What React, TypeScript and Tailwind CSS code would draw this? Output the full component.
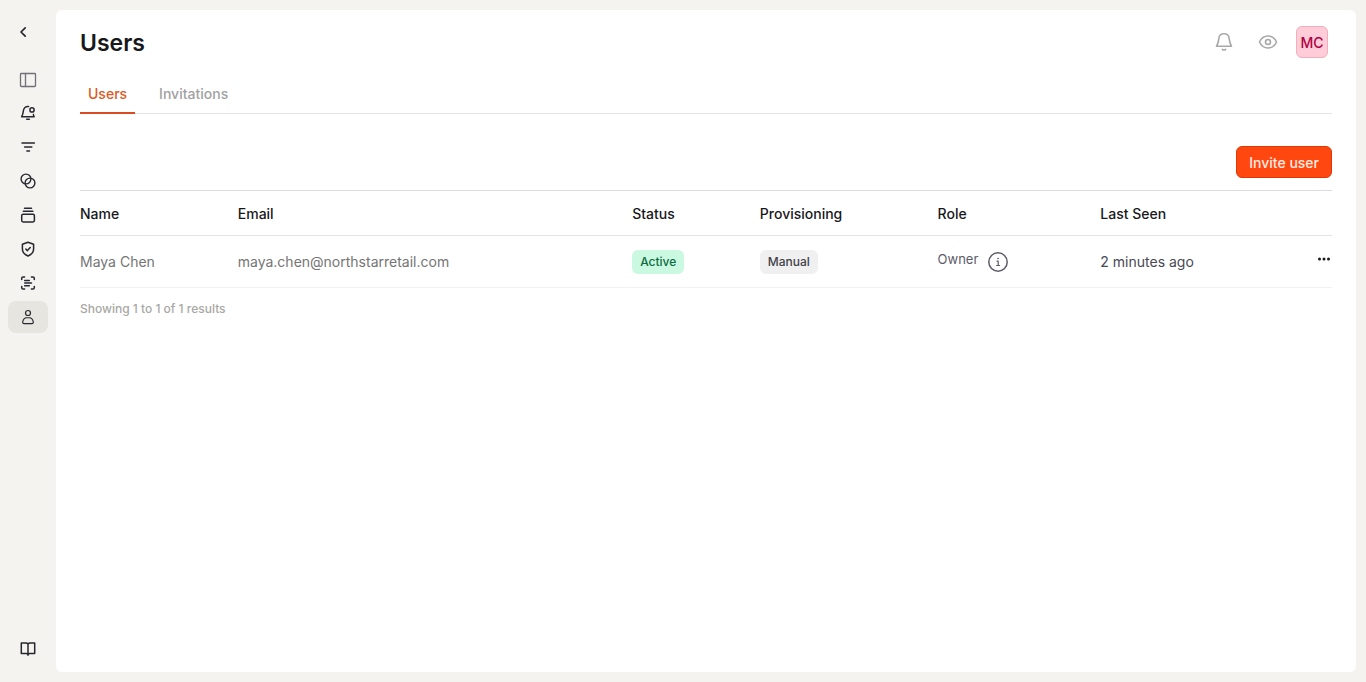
import type { ReactNode } from "react";

function Icon({ children, className = "" }: { children: ReactNode; className?: string }) {
  return (
    <svg
      viewBox="0 0 24 24"
      fill="none"
      stroke="currentColor"
      strokeWidth="1.5"
      strokeLinecap="round"
      strokeLinejoin="round"
      aria-hidden="true"
      className={`h-6 w-6 shrink-0 ${className}`}
    >
      {children}
    </svg>
  );
}

const navItems = [
  {
    label: "Toggle panel",
    className: "text-[#71717a]",
    icon: (
      <g strokeWidth="1.3">
        <rect x="4.5" y="6.5" width="15" height="13" rx="0.8" />
        <path d="M9.5 6.5v13" />
      </g>
    ),
  },
  {
    label: "Alerts",
    icon: (
      <>
        <path d="M12.6 5.5C9.5 5.2 7.6 7.2 7.4 9.8 7.2 12.3 6.7 13.9 5.6 15.8H18.2C17.9 15.1 17.6 14.4 17.4 13.6" />
        <circle cx="16" cy="8.9" r="2.1" />
        <path d="M10.7 18.2h2.6" />
      </>
    ),
  },
  {
    label: "Filters",
    icon: <path d="M6 8h12.4M8.6 12h7.2M10.9 16h2.6" />,
  },
  {
    label: "Segments",
    icon: (
      <g strokeWidth="1.4">
        <circle cx="10" cy="10" r="4.9" />
        <circle cx="14" cy="14" r="4.9" />
      </g>
    ),
  },
  {
    label: "Collections",
    icon: (
      <>
        <path d="M8.5 5.3h7M7.3 8.3h9.6" />
        <rect x="5.7" y="11.3" width="12.7" height="7.7" rx="1.4" />
      </>
    ),
  },
  {
    label: "Security",
    icon: (
      <>
        <path d="M12 5.2l5.6 2v4.9c0 3.2-2.1 5.5-5.6 6.9-3.5-1.4-5.6-3.7-5.6-6.9V7.2z" />
        <path d="M9.8 12l1.6 1.6 2.8-3" />
      </>
    ),
  },
  {
    label: "Audit log",
    icon: (
      <>
        <path d="M5.7 8.6V7.2c0-.8.5-1.3 1.3-1.3h1.6M15.4 5.9H17c.8 0 1.3.5 1.3 1.3v1.4M18.3 15.4v1.4c0 .8-.5 1.3-1.3 1.3h-1.6M8.6 18.1H7c-.8 0-1.3-.5-1.3-1.3v-1.4" />
        <path d="M8.7 9.4h4.6M8.7 12.1h6.8M8.7 14.8h4.6" />
      </>
    ),
  },
  {
    label: "Users",
    active: true,
    icon: (
      <g strokeWidth="1.2">
        <circle cx="12" cy="8" r="2.5" />
        <path d="M12 12.5c-2.9 0-5 1.9-5.3 4.6-.1.9.4 1.6 1.3 1.6h8c.9 0 1.4-.7 1.3-1.6-.3-2.7-2.4-4.6-5.3-4.6z" />
      </g>
    ),
  },
];

function Sidebar() {
  return (
    <nav aria-label="Main" className="flex w-14 shrink-0 flex-col px-2 pt-5 pb-[18px] text-[#27272f]">
      <button type="button" aria-label="Back" className="flex w-8 justify-center">
        <Icon>
          <path d="M13.2 7.8L9 12l4.2 4.2" strokeWidth="1.7" />
        </Icon>
      </button>
      <div className="mt-[19px] flex flex-col gap-0.5">
        {navItems.map((item) => (
          <a
            key={item.label}
            href="#"
            aria-label={item.label}
            aria-current={item.active ? "page" : undefined}
            className={`flex h-8 items-center justify-center rounded-lg ${item.active ? "bg-[#e6e5df]" : ""} ${item.className ?? ""}`}
          >
            <Icon>{item.icon}</Icon>
          </a>
        ))}
      </div>
      <a href="#" aria-label="Documentation" className="mt-auto flex h-8 items-center justify-center">
        <Icon>
          <path d="M12 8c-.5-.7-1.2-1-2.1-1H5.3v10.6h4.9c.9 0 1.5.3 1.8 1 .3-.7.9-1 1.8-1h4.9V7h-4.6c-.9 0-1.6.3-2.1 1zM12 8v11.2" />
        </Icon>
      </a>
    </nav>
  );
}

function Header() {
  return (
    <header className="flex h-8 items-center justify-between pr-1">
      <h1 className="pt-0.5 text-[23px] font-semibold text-[#18181b]">Users</h1>
      <div className="flex items-center gap-5 text-[#a8a8a8]">
        <button type="button" aria-label="Notifications">
          <Icon>
            <path
              d="M12 3.7c-3 0-5 2.1-5.2 4.9-.2 3.2-.9 5-2.3 7.7h15c-1.4-2.7-2.1-4.5-2.3-7.7C17 5.8 15 3.7 12 3.7z"
              strokeWidth="1.6"
            />
            <path d="M10.3 19.4c.5.5 1 .7 1.7.7s1.2-.2 1.7-.7" />
          </Icon>
        </button>
        <button type="button" aria-label="Preview">
          <Icon>
            <g strokeWidth="1.6">
              <path d="M3.5 12c1.7-3.7 4.6-6 8.5-6s6.8 2.3 8.5 6c-1.7 3.7-4.6 6-8.5 6s-6.800-2.300-8.500-6z" />
              <circle cx="12" cy="12" r="2.5" />
            </g>
          </Icon>
        </button>
        <button
          type="button"
          className="-ml-1 flex h-8 w-8 items-center justify-center rounded-md border border-[#f3adbd] bg-[#ffccd8] pt-0.5 text-sm font-medium text-[#b00045]"
        >
          MC
        </button>
      </div>
    </header>
  );
}

function UsersTable() {
  return (
    <table className="mt-3 w-full table-fixed border-t border-[#dcdcdf] text-left text-sm">
      <colgroup>
        <col className="w-[12.6%]" />
        <col className="w-[31.5%]" />
        <col className="w-[10.2%]" />
        <col className="w-[14.2%]" />
        <col className="w-[13%]" />
        <col />
        <col className="w-8" />
      </colgroup>
      <thead>
        <tr className="h-[45px] border-b border-[#e4e4e7] text-[#18181b]">
          <th className="pt-0.5 font-medium">Name</th>
          <th className="pt-0.5 font-medium">Email</th>
          <th className="pt-0.5 font-medium">Status</th>
          <th className="pt-0.5 font-medium">Provisioning</th>
          <th className="pt-0.5 font-medium">Role</th>
          <th className="pt-0.5 font-medium">Last Seen</th>
          <th aria-label="Actions" />
        </tr>
      </thead>
      <tbody>
        <tr className="h-[52px] border-b border-[#f1f1f3] text-[#757575]">
          <td>Maya Chen</td>
          <td>maya.chen@northstarretail.com</td>
          <td>
            <span className="inline-flex h-6 items-center rounded-md bg-[#cbf8e0] px-2 text-xs font-medium text-[#0b6b43]">
              Active
            </span>
          </td>
          <td>
            <span className="inline-flex h-6 items-center rounded-md bg-[#f0f0f1] px-2 text-xs font-medium text-[#3f3f46]">
              Manual
            </span>
          </td>
          <td>
            <div className="flex items-start gap-2 text-[#5c5c68]">
              <span className="text-[13px] leading-[18px]">Owner</span>
              <button type="button" aria-label="About this role">
                <Icon>
                  <circle cx="12" cy="12" r="9.2" />
                  <path d="M11 11.2h1.2v4.3M10.6 15.5h3" strokeWidth="1.2" />
                  <circle cx="12" cy="8.6" r="0.5" fill="currentColor" strokeWidth="0.6" />
                </Icon>
              </button>
            </div>
          </td>
          <td className="text-[#484854]">2 minutes ago</td>
          <td>
            <div className="flex justify-end pb-1.5">
              <button type="button" aria-label="Row actions" className="text-[#18181b]">
                <svg viewBox="0 0 16 16" fill="currentColor" aria-hidden="true" className="h-4 w-4">
                  <circle cx="3.5" cy="8" r="1.5" />
                  <circle cx="8" cy="8" r="1.5" />
                  <circle cx="12.5" cy="8" r="1.5" />
                </svg>
              </button>
            </div>
          </td>
        </tr>
      </tbody>
    </table>
  );
}

export default function App() {
  return (
    <div className="flex min-h-screen bg-[#f4f3ef] font-['Inter',sans-serif]">
      <Sidebar />
      <main className="my-2.5 mr-2.5 min-w-0 flex-1 rounded-md bg-white px-6 pt-4">
        <Header />
        <div role="tablist" className="mt-4 flex h-10 gap-4 border-b border-[#e4e4e7] text-sm font-medium">
          <button
            type="button"
            role="tab"
            aria-selected="true"
            className="-mb-px border-b-2 border-[#dc4b20] px-2 pt-0.5 text-[#dc5a24]"
          >
            Users
          </button>
          <button type="button" role="tab" aria-selected="false" className="px-2 text-[#a1a1a1]">
            Invitations
          </button>
        </div>
        <div className="mt-8 flex justify-end">
          <button
            type="button"
            className="h-8 rounded-md border border-[#d93a08] bg-[#ff470f] px-3 pt-0.5 text-sm font-medium text-[#ffece5]"
          >
            Invite user
          </button>
        </div>
        <UsersTable />
        <p className="mt-3 text-xs leading-[18px] font-medium text-[#a8a8a4]">Showing 1 to 1 of 1 results</p>
      </main>
    </div>
  );
}
